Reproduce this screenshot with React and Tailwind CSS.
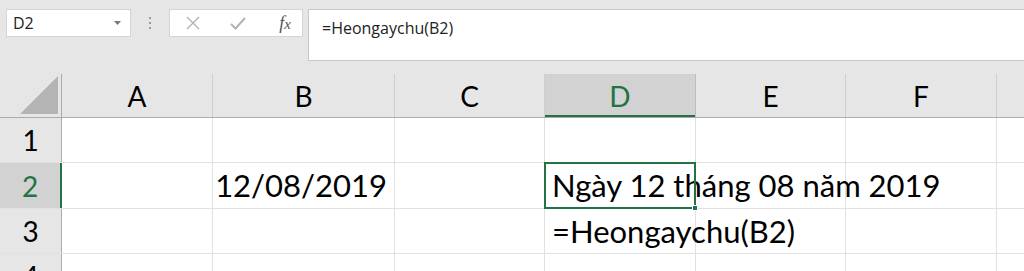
import React from 'react'

const cols = [
    { key: 'A', w: 'w-[151px]' },
    { key: 'B', w: 'w-[182px]' },
    { key: 'C', w: 'w-[150px]' },
    { key: 'D', w: 'w-[151px]' },
    { key: 'E', w: 'w-[150px]' },
    { key: 'F', w: 'w-[151px]' },
]

const rows = [
    { n: '1', h: 'h-[45px]' },
    { n: '2', h: 'h-[46px]' },
    { n: '3', h: 'h-[45px]' },
    { n: '4', h: 'h-[45px]' },
]

const cellFont = { fontFamily: 'Lato, "Noto Sans", sans-serif' }

const Toolbar = () => (
    <div className="h-[74px] bg-[#e6e6e6] flex items-start pt-[9px] pl-[6px]" style={{ fontFamily: '"Open Sans", "Noto Sans", sans-serif' }}>
        <div className="w-[125px] h-[28px] bg-white border border-[#d4d4d4] flex items-center justify-between pl-[6px] pr-[9px] text-[16px] text-[#222]">
            <span>D2</span>
            <svg width="7" height="4" viewBox="0 0 7 4"><path d="M0 0h7L3.5 4z" fill="#777" /></svg>
        </div>
        <div className="w-[38px] h-[28px] flex flex-col items-center justify-center gap-[3px]">
            <span className="w-[2px] h-[2px] bg-[#9a9a9a]"></span>
            <span className="w-[2px] h-[2px] bg-[#9a9a9a]"></span>
            <span className="w-[2px] h-[2px] bg-[#9a9a9a]"></span>
        </div>
        <div className="w-[134px] h-[28px] bg-white border border-[#d4d4d4] flex items-center">
            <div className="w-[44px] flex justify-center pl-[2px]">
                <svg width="14" height="14" viewBox="0 0 14 14"><path d="M1 1l12 12M13 1L1 13" stroke="#b3b3b3" strokeWidth="1.4" fill="none" /></svg>
            </div>
            <div className="w-[44px] flex justify-center pl-[4px]">
                <svg width="16" height="13" viewBox="0 0 16 13"><path d="M1 7l4.5 4.5L15 1" stroke="#b3b3b3" strokeWidth="2" fill="none" /></svg>
            </div>
            <div className="w-[44px] flex justify-center pl-[10px] text-[18px] italic text-[#555]" style={{ fontFamily: '"Liberation Serif", serif' }}>
                <span>f<span className="text-[15px]">x</span></span>
            </div>
        </div>
        <div className="ml-[5px] flex-1 h-[52px] bg-white border-t border-l border-b border-[#c8c8c8] pl-[13px] pt-[6px] text-[16px] text-[#222]">
            =Heongaychu(B2)
        </div>
    </div>
)

const Header = () => (
    <div className="flex h-[44px] bg-[#e6e6e6] border-b border-[#ababab]" style={cellFont}>
        <div className="w-[62px] shrink-0 border-r border-[#ababab] flex items-end justify-end pr-[3px] pb-[3px]">
            <svg width="38" height="38" viewBox="0 0 38 38"><path d="M38 0V38H0z" fill="#b4b4b4" /></svg>
        </div>
        {cols.map(c => (
            <div
                key={c.key}
                className={`${c.w} shrink-0 flex items-center justify-center text-[28px] border-r ${c.key === 'D' ? 'bg-[#d2d2d2] text-[#217346] border-[#bdbdbd] shadow-[inset_0_-2px_0_#217346]' : 'text-black border-[#cfcfcf]'}`}
            >
                {c.key}
            </div>
        ))}
        <div className="flex-1"></div>
    </div>
)

const App = () => {
    return (
        <div className="w-[1024px] h-[271px] overflow-hidden bg-white">
            <Toolbar />
            <Header />
            {rows.map(r => (
                <div key={r.n} className={`flex ${r.h} border-b border-[#e1e1e1]`} style={cellFont}>
                    <div className={`w-[62px] shrink-0 flex items-center justify-center text-[28px] border-r ${r.n === '2' ? 'bg-[#d2d2d2] text-[#217346] border-r-[#217346] border-r-2' : 'bg-[#e6e6e6] border-[#ababab]'}`}>
                        {r.n}
                    </div>
                    {cols.map(c => (
                        <div key={c.key} className={`${c.w} shrink-0 border-r border-[#e1e1e1] relative flex items-center text-[31px] text-black`}>
                            {r.n === '2' && c.key === 'B' && (
                                <span className="w-full text-right pr-[7px]">12/08/2019</span>
                            )}
                            {r.n === '2' && c.key === 'D' && (
                                <>
                                    <span className="absolute left-[7px] whitespace-nowrap z-10">Ngày 12 tháng 08 năm 2019</span>
                                    <div className="absolute -left-px -top-px -right-px -bottom-px border-2 border-[#217346] z-20"></div>
                                    <div className="absolute -right-[3px] -bottom-[3px] w-[6px] h-[6px] bg-[#217346] border border-white z-30"></div>
                                </>
                            )}
                            {r.n === '3' && c.key === 'D' && (
                                <span className="absolute left-[7px] whitespace-nowrap z-10">=Heongaychu(B2)</span>
                            )}
                        </div>
                    ))}
                    <div className="flex-1"></div>
                </div>
            ))}
        </div>
    )
}

export default App
